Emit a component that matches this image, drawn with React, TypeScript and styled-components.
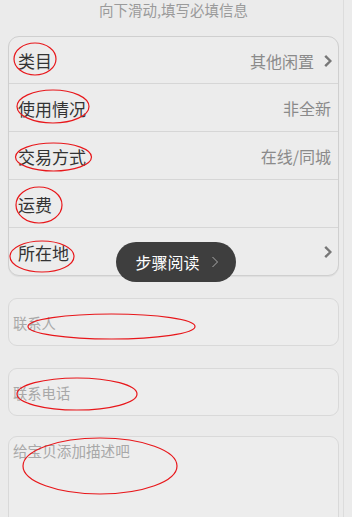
import React from 'react';
import styled, { createGlobalStyle } from 'styled-components';

const GlobalStyle = createGlobalStyle`
  html, body {
    margin: 0;
    padding: 0;
    background: #ebebeb;
    font-family: "Noto Sans CJK SC", "Noto Sans", sans-serif;
  }
`;

const Page = styled.div`
  position: relative;
  width: 344px;
  height: 517px;
  overflow: hidden;
  padding: 0 4px 0 8px;
  box-sizing: border-box;
  border-right: 1px solid #dcdcdc;
`;

const Hint = styled.div`
  height: 36px;
  margin-top: -8px;
  line-height: 36px;
  text-align: center;
  font-size: 14.5px;
  color: #9a9a9a;
`;

const Card = styled.div`
  margin-top: 8px;
  border: 1px solid #cfcfcf;
  border-radius: 11px;
  background: #ececec;
  box-shadow: 0 1px 1px rgba(0, 0, 0, 0.06);
  overflow: hidden;
`;

const Row = styled.div`
  display: flex;
  align-items: center;
  height: 48px;
  padding: 1px 6px 0 9px;
  box-sizing: border-box;
  border-top: 1px solid #d6d6d6;

  &:first-child {
    border-top: none;
    height: 46px;
  }
`;

const Label = styled.span`
  flex: 1;
  font-size: 17px;
  color: #333;
`;

const Value = styled.span`
  font-size: 16px;
  color: #8a8a8a;
  margin-right: 1px;
`;

const Arrow = styled.svg`
  width: 8px;
  height: 14px;
  margin-left: 9px;
`;

const Field = styled.div<{ $tall?: boolean }>`
  margin-top: ${({ $tall }) => ($tall ? '20px' : '22px')};
  height: ${({ $tall }) => ($tall ? '110px' : '46px')};
  display: flex;
  align-items: ${({ $tall }) => ($tall ? 'flex-start' : 'center')};
  padding: ${({ $tall }) => ($tall ? '3px 4px' : '0 4px')};
  border: 1px solid #d9d9d9;
  border-radius: 9px;
  background: #ededed;
  font-size: ${({ $tall }) => ($tall ? '14.6px' : '14.3px')};
  color: #a8a8a8;
`;

const Toast = styled.div`
  position: absolute;
  left: 116px;
  top: 242px;
  width: 120px;
  height: 40px;
  border-radius: 20px;
  background: #3e3e3e;
  color: #fff;
  font-size: 16px;
  display: flex;
  align-items: center;
  justify-content: center;
  gap: 11px;
  padding-left: 2px;
  box-sizing: border-box;
`;

const Marks = styled.svg`
  position: absolute;
  left: 0;
  top: 0;
  width: 352px;
  height: 517px;
  pointer-events: none;
`;

const Chevron = () => (
  <Arrow viewBox="0 0 8 14">
    <path d="M1.2 1.8 L6.4 7 L1.2 12.2" fill="none" stroke="#777" strokeWidth="2.4" />
  </Arrow>
);

const rows = [
  { label: '类目', value: '其他闲置', arrow: true },
  { label: '使用情况', value: '非全新' },
  { label: '交易方式', value: '在线/同城' },
  { label: '运费', value: '' },
  { label: '所在地', value: '', arrow: true },
];

const ellipses = [
  [35, 59, 21, 16],
  [53, 106.5, 36, 16.5],
  [53.5, 157, 38, 14],
  [39, 205, 23, 18],
  [42, 256.5, 32, 15.5],
  [111.5, 326.5, 83.5, 12.5],
  [77, 394, 60, 16],
  [100, 466, 77, 28],
];

export default function App() {
  return (
    <>
      <GlobalStyle />
      <Page>
        <Hint>向下滑动,填写必填信息</Hint>
        <Card>
          {rows.map((r) => (
            <Row key={r.label}>
              <Label>{r.label}</Label>
              {r.value && <Value>{r.value}</Value>}
              {r.arrow && <Chevron />}
            </Row>
          ))}
        </Card>
        <Field>联系人</Field>
        <Field>联系电话</Field>
        <Field $tall>给宝贝添加描述吧</Field>
        <Toast>
          步骤阅读
          <svg width="8" height="12" viewBox="0 0 8 12">
            <path d="M1.5 1 L6.5 6 L1.5 11" fill="none" stroke="#aaa" strokeWidth="1" />
          </svg>
        </Toast>
        <Marks viewBox="0 0 352 517">
          {ellipses.map(([cx, cy, rx, ry], i) => (
            <ellipse key={i} cx={cx} cy={cy} rx={rx} ry={ry} fill="none" stroke="#e8171b" strokeWidth="1.2" />
          ))}
        </Marks>
      </Page>
    </>
  );
}
